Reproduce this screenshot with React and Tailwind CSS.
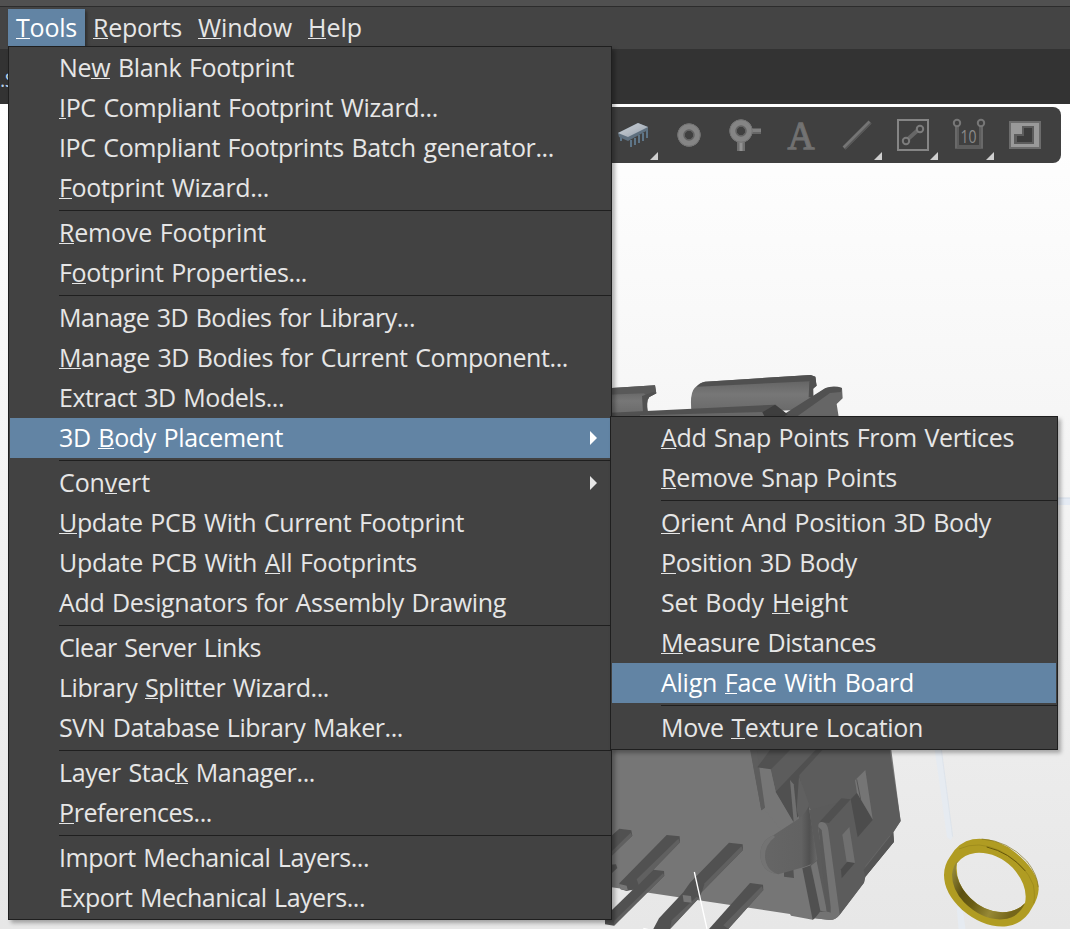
import { useLayoutEffect, useRef, useState } from "react";

// "&" marks the mnemonic letter; width is the drawn width of the label.
const toolsMenu = [
  ["Ne&w Blank Footprint", 235],
  ["&IPC Compliant Footprint Wizard...", 379],
  ["IPC Compliant Footprints Batch generator...", 495],
  ["&Footprint Wizard...", 210],
  null,
  ["&Remove Footprint", 207],
  ["F&ootprint Properties...", 248],
  null,
  ["Manage 3D Bodies for Library...", 356],
  ["&Manage 3D Bodies for Current Component...", 509],
  ["Extract 3D Models...", 225],
  ["3D &Body Placement", 224, "active", "sub"],
  null,
  ["Con&vert", 91, "", "sub"],
  ["&Update PCB With Current Footprint", 405],
  ["Update PCB With &All Footprints", 358],
  ["Add Designators for Assembly Drawing", 447],
  null,
  ["Clear Server Links", 202],
  ["Library &Splitter Wizard...", 270],
  ["SVN Database Library Maker...", 344],
  null,
  ["Layer Stac&k Manager...", 256],
  ["&Preferences...", 153],
  null,
  ["Import Mechanical Layers...", 310],
  ["Export Mechanical Layers...", 306],
];

const placementMenu = [
  ["&Add Snap Points From Vertices", 353],
  ["&Remove Snap Points", 236],
  null,
  ["&Orient And Position 3D Body", 330],
  ["&Position 3D Body", 196],
  ["Set Body &Height", 187],
  ["&Measure Distances", 215],
  ["Align &Face With Board", 253, "active"],
  null,
  ["Move &Texture Location", 262],
];

function Label({ text, width }) {
  const ref = useRef(null);
  const [spacing, setSpacing] = useState(0);
  const at = text.indexOf("&");
  const plain = text.replace("&", "");
  useLayoutEffect(() => {
    const fit = () => {
      ref.current.style.letterSpacing = "0px";
      const value = (width - ref.current.getBoundingClientRect().width) / plain.length;
      ref.current.style.letterSpacing = value + "px";
      setSpacing(value);
    };
    fit();
    document.fonts?.ready.then(() => ref.current && fit());
  }, [plain, width]);
  return (
    <span ref={ref} className="inline-block whitespace-pre [word-spacing:1.5px]" style={{ letterSpacing: spacing }}>
      {at < 0 ? (
        plain
      ) : (
        <>
          {plain.slice(0, at)}
          <span className="inline-block h-[29px] border-b border-current align-top leading-[34px]">{plain[at]}</span>
          {plain.slice(at + 1)}
        </>
      )}
    </span>
  );
}

function Menu({ items, className }) {
  return (
    <div className={"absolute border border-[#1f1f1f] bg-[#424242] py-px shadow-[3px_3px_4px_rgba(0,0,0,0.3)] " + className}>
      {items.map((item, i) =>
        item ? (
          <div
            key={i}
            className={
              "mx-px flex h-10 items-center justify-between pl-[49px] pr-[13px] leading-[34px] " +
              (item[2] === "active" ? "bg-[#6284a4] text-white" : "text-[#e6e6e6]")
            }
          >
            <div className="flex h-[34px] pb-0.5 -mt-0.5">
              <Label text={item[0]} width={item[1]} />
            </div>
            {item[3] && (
              <svg className="h-[14px] w-[7px]" viewBox="0 0 7 14" fill="currentColor">
                <path d="M0 0L7 7L0 14Z" />
              </svg>
            )}
          </div>
        ) : (
          <div key={i} className="flex h-[5px] items-center pl-[50px]">
            <div className="h-px w-full bg-[#1f1f1f]" />
          </div>
        )
      )}
    </div>
  );
}

function Scene() {
  return (
    <svg className="absolute inset-0" width="1070" height="825" viewBox="0 104 1070 825">
      <defs>
        <linearGradient id="clip" x1="0" y1="0" x2="0" y2="1">
          <stop offset="0" stopColor="#5c5c5c" />
          <stop offset="0.5" stopColor="#777" />
          <stop offset="1" stopColor="#686868" />
        </linearGradient>
        <linearGradient id="tab" x1="0" y1="0" x2="1" y2="0">
          <stop offset="0" stopColor="#666" />
          <stop offset="0.72" stopColor="#626262" />
          <stop offset="0.86" stopColor="#515151" />
          <stop offset="1" stopColor="#696969" />
        </linearGradient>
        <linearGradient id="ring" x1="0" y1="0" x2="1" y2="0.4">
          <stop offset="0" stopColor="#a39845" />
          <stop offset="0.3" stopColor="#5c5010" />
          <stop offset="0.5" stopColor="#6a5d14" />
          <stop offset="0.75" stopColor="#978935" />
          <stop offset="1" stopColor="#75661a" />
        </linearGradient>
      </defs>
      <path d="M1055 498H1070V505H1055Z" fill="#e5ebf4" />
      <path d="M1055 498H1070" stroke="#d4dde8" />
      {/* upper shield clips */}
      <g transform="translate(600 360) scale(.33333)">
        <path d="M0 86L165 76L169 100L148 111Q137 124 144 170H0Z" fill="url(#clip)" />
        <path d="M0 86L165 76L169 100L145 112L132 100L0 105Z" fill="#595959" />
        <path d="M126 108L160 96L169 100L148 111Q137 124 144 156H129Z" fill="#515151" />
        <path d="M275 160Q268 100 284 84Q298 68 315 65L632 45L646 50L650 77L640 84V120L600 150Z" fill="url(#clip)" />
        <path d="M290 80Q300 68 315 65L632 45L646 50L648 66L628 64Z" fill="#505050" />
        <path d="M628 65L645 50L650 77L639 87L640 112H626Z" fill="#505050" />
        <path d="M545 170L680 83Q710 78 726 84L728 115L710 132L716 170Z" fill="#666" />
        <path d="M540 170L675 85Q700 75 726 84L722 96L690 99L590 170Z" fill="#515151" />
        <path d="M0 160L526 134L570 170H0Z" fill="#515151" />
        <path d="M120 166L490 156L496 170H120Z" fill="#686868" />
        <path d="M487 157L525 134L563 163L550 170H494Z" fill="#3e3e3e" />
      </g>
      {/* connector body */}
      <g transform="translate(600 740) scale(.33333)">
        <path d="M0 0H870L902 243L880 277L882 305L796 410L792 428L718 526Q706 541 688 540L645 535L638 539L573 527L570 522L30 441H0Z" fill="#767676" />
        <path d="M450 20H868L902 243L880 277L882 305L796 410L792 428L718 526L670 250L625 200L598 105L580 245L527 155L510 85L472 82L495 202L484 211Z" fill="#5c5c5c" />
        <path d="M472 84L512 87L527 155L580 244L546 274L495 210Z" fill="#767676" />
        <path d="M450 28L470 28L495 203L484 211Z" fill="#5d5d5d" />
        <path d="M472 82L510 30H570L513 88Z" fill="#515151" />
        <path d="M527 155L649 28H669L598 105L624 198L580 245Z" fill="#505050" />
        <path d="M570 120L581 133L592 238L581 245Z" fill="#707070" />
        <path d="M597 108L626 190L626 225L598 238L590 210Z" fill="#606060" />
        <path d="M607 385L635 375L669 515L638 539Z" fill="#505050" />
        <path d="M628 210L650 360L630 375L668 520L692 517L655 270L668 246L724 177L752 178Z" fill="#5b5b5b" />
        <path d="M633 377L650 363L681 515L661 512Z" fill="#747474" />
        <path d="M655 260Q653 246 668 245Q682 249 685 270L719 524Q706 541 688 540L645 535L660 515H691Z" fill="#737373" />
        <path d="M655 260L680 513L692 518L692 500L665 270Z" fill="#5a5a5a" />
        <path d="M659 245L724 175L752 178L687 249Z" fill="#505050" />
        <path d="M752 178L771 158L818 240L773 292Z" fill="#4c4c4c" />
        <path d="M765 121L796 90L818 238L771 159Z" fill="#757575" />
        <path d="M770 118L782 178" stroke="#565656" strokeWidth="3" />
        <path d="M727 284L748 261L765 368L740 366Z" fill="#707070" />
        <path d="M723 388L742 365L764 370L725 415Z" fill="#4b4b4b" />
        <path d="M791 390L878 280L882 305L796 410Z" fill="#555" />
        <path d="M796 380L870 287" stroke="#6a6a6a" strokeWidth="2" />
        <path d="M552 397L580 386L582 414L552 410Z" fill="#535353" />
        <path d="M535 403Q480 395 481 340Q483 301 520 286L590 240Q615 225 626 198L652 358Q645 371 610 382Z" fill="url(#tab)" />
        <path d="M535 403Q480 395 481 340Q483 301 520 286L525 291Q494 315 495 350Q498 391 535 403Z" fill="#737373" />
        {/* pins */}
        <g fill="#515151">
          <path d="M20 300L58 266L94 271L97 287L20 360Z" />
          <path d="M20 375L48 373L52 384L20 414Z" />
          <path d="M15 530L160 389L192 393L193 407L42 557L15 553Z" />
          <path d="M58 430L200 285L239 289L240 307L103 448L80 453L62 448Z" />
          <path d="M160 567L177 535L250 457L270 428L387 308L428 313L429 330L306 455L296 475L210 567Z" />
          <path d="M327 567L450 429L489 434L490 450L385 567Z" />
        </g>
        <g fill="#606060">
          <path d="M36 333L92 278L97 287L36 347Z" />
          <path d="M110 418L235 296L240 307L116 434Z" />
          <path d="M43 542L189 400L193 407L42 557Z" />
          <path d="M314 430L424 319L429 330L306 455Z" />
          <path d="M215 541L290 470L297 475L210 567Z" />
          <path d="M370 556L485 439L490 450L385 567Z" />
        </g>
        <path d="M248 465L273 468L275 488L251 485ZM58 432L80 437L84 452L62 448Z" fill="#777" />
        <path d="M283 396L321 567" stroke="white" strokeWidth="4" />
        <path d="M130 565L150 570" stroke="white" strokeWidth="4" />
      </g>
      {/* board edge and brass ring */}
      <g transform="translate(900 740) scale(.33333)">
        <path d="M104 28H124L158 290L152 300L141 292Z" fill="#e6ebf1" />
        <path d="M124 28L158 290" stroke="#d8e0e8" strokeWidth="2" />
        <path d="M170 500H187L197 570H176Z" fill="#e6ebf1" />
        <path fillRule="evenodd" d="M132 405Q132 375 150 350Q177 305 218 298Q285 289 347 338Q414 392 416 448Q414 476 397 502Q372 552 320 559Q252 565 186 509Q132 459 132 405ZM171 370Q164 425 205 468Q247 515 308 517Q351 516 375 489Q386 437 338 383Q286 334 226 339Q190 343 171 370Z" fill="#b09c22" />
        <path d="M175 361Q161 380 172 411Q181 444 211 474Q252 515 307 517Q350 516 375 490Q354 535 308 538Q248 542 192 487Q155 447 156 403Q159 375 175 361Z" fill="url(#ring)" />
        <path d="M177 327Q235 300 302 333Q378 374 400 435Q406 469 401 490" fill="none" stroke="#978519" strokeWidth="2" />
        <path d="M260 321Q327 336 376 393" fill="none" stroke="#66570a" strokeWidth="3" />
        <path d="M245 297Q324 302 380 363Q412 402 415 442" fill="none" stroke="#817016" strokeWidth="2" />
      </g>
    </svg>
  );
}

function Toolbar() {
  return (
    <div className="absolute left-[600px] top-[3px] h-14 w-[461px] rounded-r-lg bg-[#404040]">
      <svg width="461" height="56" viewBox="600 107 461 56">
        <defs>
          <linearGradient id="chip" x1="0" y1="0" x2="1" y2="1">
            <stop offset="0" stopColor="#c3ccd4" />
            <stop offset="0.5" stopColor="#b4bbc3" />
            <stop offset="1" stopColor="#8f9ba8" />
          </linearGradient>
        </defs>
        <g fill="#cfcfcf">
          <path d="M658 152V160H650ZM882 152V160H874ZM938 152V160H930ZM994 152V160H986Z" />
        </g>
        <path d="M621 136V141M631 140V147M635 138V145M639 135V143M643 133V141M647 130V138" stroke="#66839a" strokeWidth="1.6" />
        <path d="M618 133L638 123L648 127V130L628 141L619 137Z" fill="#5f707f" />
        <path d="M618 133L638 123L648 127L628 137Z" fill="url(#chip)" />
        <circle cx="689" cy="135" r="8" fill="none" stroke="#858585" strokeWidth="7" />
        <circle cx="689" cy="135" r="11.2" fill="none" stroke="#747474" />
        <circle cx="689" cy="135" r="5" fill="none" stroke="#636363" strokeWidth="1.5" />
        <path d="M752 131H761" stroke="#808080" strokeWidth="5" />
        <path d="M752 133H761" stroke="#666" strokeWidth="2" />
        <path d="M741 142V151" stroke="#707070" strokeWidth="8" />
        <path d="M741 142V151" stroke="#929292" strokeWidth="3" />
        <circle cx="741" cy="131" r="8" fill="none" stroke="#858585" strokeWidth="7" />
        <circle cx="741" cy="131" r="11.2" fill="none" stroke="#747474" />
        <circle cx="741" cy="131" r="5" fill="none" stroke="#636363" strokeWidth="1.5" />
        <text x="801" y="149" textAnchor="middle" fontFamily="Liberation Serif, serif" fontSize="41" textLength="27" lengthAdjust="spacingAndGlyphs" fill="#747474" stroke="#707070" strokeWidth="1.3">A</text>
        <path d="M844 148L870 122" stroke="#747474" strokeWidth="4" />
        <path d="M845 149L871 123" stroke="#565656" strokeWidth="1.5" />
        <rect x="898" y="120" width="30" height="30" fill="none" stroke="#858585" strokeWidth="2" />
        <path d="M908 139L918 130" stroke="#666" strokeWidth="4" />
        <g fill="#404040" stroke="#7c7c7c" strokeWidth="2">
          <circle cx="906" cy="141" r="3.2" />
          <circle cx="920" cy="129" r="3.2" />
        </g>
        <path d="M957 126V147H981V126" fill="none" stroke="#5d5d5d" strokeWidth="4" />
        <path d="M956 126V148M982 126V148" stroke="#777" />
        <g fill="#404040" stroke="#777" strokeWidth="2">
          <circle cx="957" cy="123" r="3.2" />
          <circle cx="981" cy="123" r="3.2" />
        </g>
        <text x="968.5" y="143" textAnchor="middle" fontFamily="Open Sans, sans-serif" fontSize="19" textLength="16" lengthAdjust="spacingAndGlyphs" fill="#8b8b8b">10</text>
        <rect x="1010" y="122" width="30" height="26" fill="#999" stroke="#6c6c6c" strokeWidth="2" />
        <path d="M1022 126H1034V144H1014V134H1022Z" fill="#5c5c5c" />
        <path d="M1024 128H1032V142H1017V136H1024Z" fill="#3c3c3c" />
      </svg>
    </div>
  );
}

export default function App() {
  return (
    <div className="relative flex h-[929px] w-[1070px] flex-col overflow-hidden bg-[#333] text-[25px] text-[#e6e6e6] [font-family:'Open_Sans','Noto_Sans',sans-serif]">
      <div className="h-[7px] shrink-0 border-b border-[#2c2c2c] bg-[#505050]" />
      <nav className="flex h-[42px] shrink-0 bg-[#444] pl-2 pt-0.5 leading-[34px]">
        <div className="flex h-[37px] w-[77px] items-start bg-[#6284a4] pl-2 pt-px text-white shadow-[2px_2px_3px_rgba(0,0,0,0.35)]">
          <Label text="&Tools" width={61} />
        </div>
        <div className="flex h-[37px] w-[105px] items-start pl-2 pt-px">
          <Label text="&Reports" width={89} />
        </div>
        <div className="flex h-[37px] w-[110px] items-start pl-2 pt-px">
          <Label text="&Window" width={94} />
        </div>
        <div className="flex h-[37px] items-start pl-2 pt-px">
          <Label text="&Help" width={54} />
        </div>
      </nav>
      <div className="h-[55px] shrink-0 overflow-hidden bg-[#333] pt-[14px] text-xl leading-[34px] tracking-[-0.5px] text-[#b8d0e8]">.S</div>
      <main className="relative h-[825px] shrink-0 bg-linear-to-b from-white to-[#e7e7e7]">
        <Scene />
        <Toolbar />
      </main>
      <Menu items={toolsMenu} className="left-2 top-[46px] w-[604px]" />
      <Menu items={placementMenu} className="left-[610px] top-[416px] w-[448px]" />
    </div>
  );
}
